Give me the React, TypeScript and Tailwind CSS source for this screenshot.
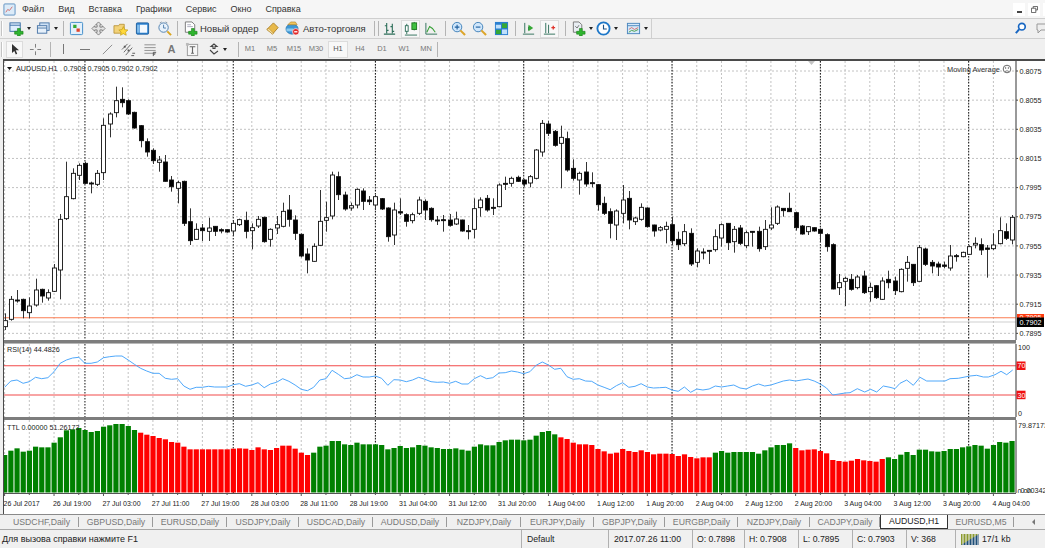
// MetaTrader 4 window: AUDUSD,H1 chart with RSI and TTL sub-windows
import type { ReactNode } from 'react'

// ── Chart data (read off the picture) ─────────────────────────────

const xOf = (i: number) => 4.6 + 6.18 * i

// high, body top, body bottom, low (y = 60 + v / 3), 1 = bull (white body)
const candles: number[][] = [
  [760,782,800,810,1],[708,718,778,782,1],[690,720,722,728,0],[716,718,752,775,0],[712,738,758,775,1],[656,690,735,740,1],[686,688,708,728,0],[688,698,714,722,1],
  [612,624,694,696,1],[462,478,630,718,1],[305,410,476,480,1],[325,340,416,418,1],[310,316,346,360,1],[305,310,370,372,0],[365,369,371,400,0],[330,340,373,378,1],
  [175,196,338,360,1],[157,162,192,232,1],[80,122,158,172,1],[82,118,128,142,0],[118,122,162,165,0],[155,157,204,206,0],[195,197,242,262,0],[235,245,276,290,0],
  [265,271,302,312,0],[288,300,307,335,1],[285,306,364,365,0],[348,360,380,395,0],[362,368,385,430,1],[362,364,490,498,0],[445,485,542,555,0],[490,508,538,540,1],
  [492,504,512,543,0],[473,504,514,543,1],[498,499,514,528,0],[505,509,513,520,0],[508,509,516,518,0],[480,490,513,528,1],[476,479,494,498,1],[455,481,514,535,0],
  [490,503,512,568,1],[468,478,498,504,1],[470,472,545,548,0],[505,508,538,560,1],[468,494,504,522,1],[428,454,499,502,1],[405,450,478,500,0],[466,480,520,540,0],
  [520,523,588,592,0],[565,582,600,640,0],[550,559,604,605,1],[390,484,556,558,1],[425,473,481,515,1],[335,345,468,478,1],[335,350,404,420,0],[395,405,447,452,0],
  [428,437,444,452,1],[385,388,435,445,1],[385,393,424,450,0],[408,420,425,435,0],[405,410,435,450,1],[414,416,447,450,0],[442,444,530,545,0],[428,450,525,555,1],
  [415,455,459,465,0],[460,464,484,500,0],[458,464,482,490,1],[410,420,460,465,1],[418,424,450,480,0],[442,445,479,485,0],[468,480,483,495,0],[465,479,481,515,0],
  [462,480,496,500,0],[455,477,492,495,1],[479,480,513,515,0],[495,512,514,538,0],[415,446,508,535,1],[412,420,443,470,1],[405,415,450,455,0],[415,442,445,465,0],
  [370,375,440,442,1],[350,370,373,390,0],[350,355,370,380,1],[347,352,364,366,0],[358,360,372,380,0],[345,350,369,382,1],[267,270,355,358,1],[180,190,276,290,1],
  [182,192,220,228,0],[210,214,256,260,0],[197,232,250,385,1],[215,236,330,335,0],[298,325,355,362,0],[335,340,360,404,1],[306,336,372,380,0],[337,368,371,382,0],
  [372,374,434,452,0],[410,430,460,465,0],[445,455,490,535,0],[448,453,495,540,1],[375,420,460,490,1],[393,415,480,508,0],[470,474,485,495,1],[430,442,478,482,1],
  [442,444,500,503,0],[494,495,513,530,0],[498,503,510,514,1],[485,499,508,550,1],[470,494,542,555,0],[515,538,554,570,0],[492,515,551,558,1],[505,520,612,618,0],
  [565,573,607,622,1],[565,576,578,598,0],[570,571,573,612,0],[508,530,569,575,1],[490,494,534,560,1],[490,490,548,570,0],[498,508,545,578,1],[495,504,550,555,0],
  [512,518,557,565,1],[513,514,516,560,0],[500,514,566,575,0],[480,508,560,570,1],[442,495,504,510,1],[436,441,490,495,1],[445,445,452,470,0],[398,445,455,455,0],
  [455,458,503,512,0],[495,498,522,524,0],[498,500,515,525,1],[502,503,513,515,0],[505,508,520,545,0],[520,524,560,575,0],[550,554,687,688,0],[642,668,683,705,1],
  [650,655,664,738,1],[642,658,688,692,0],[645,651,683,688,1],[632,648,698,702,0],[668,682,695,725,1],[675,677,713,717,0],[652,663,718,720,1],[632,658,668,685,0],
  [650,663,692,705,0],[625,628,695,697,1],[588,607,625,665,1],[612,613,668,678,0],[555,563,664,665,1],[563,567,613,618,0],[600,607,618,640,0],[605,612,621,648,0],
  [605,615,619,625,0],[555,588,624,632,1],[582,587,590,605,0],[575,577,590,592,1],[556,560,583,585,1],[532,550,555,565,1],[535,554,570,585,0],[555,564,568,653,0],
  [520,555,566,570,1],[472,512,551,553,1],[490,515,535,540,0],[465,472,540,553,1],
]

const rsiPoints = [
  ...[262,243,240,250,245,232,236,233,215,190,180,174,172,190,190,186,173,170,168,168,180,193,205,213,220,220,235,238,236,258,268,262,262,259,261,261,261,254,251,259,255,248,263,252,247,236,244,255]
    .map((v, i) => [xOf(i), 300 + v / 3]),
  ...[148,152,142,120,116,91,103,116,114,104,111,111,108,115,136,119,120,125,120,112,118,125,127,126,130,124,132,132,116,107,116,113,99,98,93,96,101,95,76,66,75,88,85,110,118,116,123,124,135,142,149,137,128,142,139,131,141,144,143,142,150,154,141,157,147]
    .map((v, i) => [xOf(48 + i), 340 + v / 3]),
  ...[390,389,386,387,386,385,388,389,386,384,386,385,383,381,380,381,380,379,381,384,388,395,394,393]
    .map((v, i) => [xOf(113 + i), v]),
  ...[[0,278],[22,266],[44,276],[62,268],[80,276],[100,258],[120,262],[135,266],[150,250],[170,240],[190,256],[210,232],[230,243],[285,243],[300,236],[325,235],[360,228],[380,226],[400,231],[415,231],[435,224],[453,214],[470,224],[488,210]]
    .map(([x, v]) => [850 + x / 3, 300 + v / 3]),
]

const ttlTops = [
  ...[45,32,25,35,32,20,22,22,8].map((v) => 440 + v / 3),
  437.3,430.3,429.3,428,430,432,431,426.7,425.3,424,424,426,430,432.7,434.7,436,438,439.3,
  ...[6,8,20,28,28,28,28,28,28,28,26,25,26,30,22,28,30,24,17,17,26].map((v) => 440 + v / 3),
  ...[338,345,338,320,317,303,303,313,315,308,313,313,313,315,328,324,318,324,322,315,317,322,324,327,327,325,329,332,320,313,316,316,306,301,299,299,301,299,287,276,273,283,292,297,308,313,313,315,327,334,341,338,327,333,336,331,336,343,341,341,342,348,343,351,355].map((v) => 340 + v / 3),
  ...[52,52,38,33,38,36,36,36,36,41,31,22,15,15,10,24,31,29,28,33,40,60,63,65,62,57,61,63,65,57,52,57,44,36,45,29,29,34,35,33,27,27,22,19,15,17,26,15,6,8,3].map((v) => 440 + v / 3),
]

const isRedBar = (i: number) => (i >= 22 && i <= 49) || (i >= 90 && i <= 114) || (i >= 128 && i <= 142)

const gridCols = Array.from({ length: 41 }, (_, k) => xOf(k * 4)).filter((x) => x < 1015)
const periodCols = [13, 37, 60, 84, 108, 132, 156].map(xOf)
const priceLabels = ['0.8075', '0.8055', '0.8035', '0.8015', '0.7995', '0.7975', '0.7955', '0.7935', '0.7915', '0.7895']
const timeLabels = [
  '26 Jul 2017', '26 Jul 19:00', '27 Jul 03:00', '27 Jul 11:00', '27 Jul 19:00', '28 Jul 03:00', '28 Jul 11:00',
  '28 Jul 19:00', '31 Jul 04:00', '31 Jul 12:00', '31 Jul 20:00', '1 Aug 04:00', '1 Aug 12:00', '1 Aug 20:00',
  '2 Aug 04:00', '2 Aug 12:00', '2 Aug 20:00', '3 Aug 04:00', '3 Aug 12:00', '3 Aug 20:00', '4 Aug 04:00',
]

const tabs = [
  { label: 'USDCHF,Daily', w: 'w-[79px] pl-[4px]' },
  { label: 'GBPUSD,Daily', w: 'w-[74px]' },
  { label: 'EURUSD,Daily', w: 'w-[74px]' },
  { label: 'USDJPY,Daily', w: 'w-[72px]' },
  { label: 'USDCAD,Daily', w: 'w-[74px]' },
  { label: 'AUDUSD,Daily', w: 'w-[74px]' },
  { label: 'NZDJPY,Daily', w: 'w-[74px]' },
  { label: 'EURJPY,Daily', w: 'w-[73px]' },
  { label: 'GBPJPY,Daily', w: 'w-[71px]' },
  { label: 'EURGBP,Daily', w: 'w-[73px]' },
  { label: 'NZDJPY,Daily', w: 'w-[72px]' },
  { label: 'CADJPY,Daily', w: 'w-[70px]' },
]

const periods = ['M1', 'M5', 'M15', 'M30', 'H1', 'H4', 'D1', 'W1', 'MN']

// ── Small shared pieces ───────────────────────────────────────────

function Ico({ children, className = 'w-[15px] h-[15px]' }: { children: ReactNode; className?: string }) {
  return (
    <svg viewBox="0 0 16 16" className={className}>
      {children}
    </svg>
  )
}

const GreenPlus = () => <path d="M9 8h3v3h3v3h-3v2H9v-2H6v-3h3z" fill="#2fb52f" stroke="#157a15" strokeWidth="0.6" />

const Caret = () => <span className="w-0 h-0 border-x-[2.5px] border-x-transparent border-t-[3px] border-t-[#222] ml-[3px]" />

const Sep = ({ className = '' }: { className?: string }) => (
  <span className={`w-px h-[15px] bg-[#b4b4b4] shrink-0 ${className}`} />
)

const Handle = () => <span className="w-[2px] h-[15px] bg-[#c4c4c4] border-r border-[#fff] ml-[1px] mr-[3px] shrink-0" />

function Slot({ className, children }: { className: string; children: ReactNode }) {
  return <span className={`flex items-center justify-center shrink-0 h-full ${className}`}>{children}</span>
}

// ── Chart panes ───────────────────────────────────────────────────

function VerticalGrid({ y1, y2 }: { y1: number; y2: number }) {
  return (
    <>
      {gridCols.map((x) => (
        <line key={x} x1={x} x2={x} y1={y1} y2={y2} stroke="#c2c2c2" strokeDasharray="2 2" />
      ))}
    </>
  )
}

function PeriodLines({ y1, y2 }: { y1: number; y2: number }) {
  return (
    <>
      {periodCols.map((x) => (
        <line key={x} x1={x} x2={x} y1={y1} y2={y2} stroke="#111" strokeDasharray="1.5 1.5" />
      ))}
    </>
  )
}

const AxisEdge = ({ y1, y2 }: { y1: number; y2: number }) => (
  <line x1={1016} x2={1016} y1={y1} y2={y2} stroke="#555" strokeWidth="1.2" />
)

function MainPane() {
  return (
    <svg viewBox="4 61 1041 279" className="block w-[1041px] h-[279px] shrink-0 text-[7.2px]">
      {priceLabels.map((p, k) => {
        const y = 71 + k * 29.15
        return (
          <g key={p}>
            <line x1={4} x2={1016} y1={y} y2={y} stroke="#c2c2c2" strokeDasharray="2 2" />
            <line x1={1016} x2={1018} y1={y} y2={y} stroke="#444" />
            <text x={1019.5} y={y + 2.6} fill="#222">{p}</text>
          </g>
        )
      })}
      <VerticalGrid y1={61} y2={340} />
      <PeriodLines y1={61} y2={340} />
      <line x1={4} x2={1016} y1={317.8} y2={317.8} stroke="#fb7d52" strokeWidth="1.1" />
      <line x1={4} x2={1016} y1={322} y2={322} stroke="#cfcfcf" />
      {candles.map(([hi, top, bot, lo, bull], i) => {
        const cx = Math.round(xOf(i)) + 0.5
        const y = (v: number) => 60 + v / 3
        return (
          <g key={i}>
            <line x1={cx} x2={cx} y1={y(hi)} y2={y(lo)} stroke="#333" />
            <rect
              x={cx - 2}
              y={y(top)}
              width={4}
              height={Math.max(y(bot) - y(top), 1)}
              fill={bull ? '#fff' : '#000'}
              stroke="#111"
              strokeWidth="0.9"
            />
          </g>
        )
      })}
      <path d="M808 61h7l-3.5 4z" fill="#c4c4c4" />
      <path d="M7 67h5l-2.5 3z" fill="#111" />
      <text x={16} y={71} fill="#222">AUDUSD,H1</text>
      <text x={63.5} y={71} fill="#222">0.7909 0.7905 0.7902 0.7902</text>
      <text x={947} y={71.5} fill="#333" className="text-[7.4px]">Moving Average</text>
      <circle cx={1007} cy={69} r={3.8} fill="#fff" stroke="#444" strokeWidth="0.8" />
      <path d="M1005 67.5l1.2 1M1006.2 67.5l-1.2 1M1007.8 67.5l1.2 1M1009 67.5l-1.2 1M1005 71.5q2-1.6 4 0" stroke="#333" strokeWidth="0.6" fill="none" />
      <AxisEdge y1={61} y2={340} />
      <rect x={1017} y={314} width={27} height={6} fill="#ff3c10" />
      <text x={1019.5} y={319.6} fill="#fff">0.7905</text>
      <rect x={1017} y={317.5} width={27} height={9.5} fill="#000" />
      <text x={1019.5} y={325} fill="#fff">0.7902</text>
    </svg>
  )
}

function RsiPane() {
  const line = rsiPoints.map(([x, y]) => `${x.toFixed(1)},${y.toFixed(1)}`).join(' ')
  return (
    <svg viewBox="4 344 1041 73" className="block w-[1041px] h-[73px] shrink-0 text-[7.2px]">
      <VerticalGrid y1={344} y2={417} />
      <PeriodLines y1={344} y2={417} />
      <line x1={4} x2={1016} y1={365.7} y2={365.7} stroke="#f24a4a" strokeWidth="1.1" />
      <line x1={4} x2={1016} y1={395} y2={395} stroke="#f24a4a" strokeWidth="1.1" />
      <polyline points={line} fill="none" stroke="#4fa8fb" strokeWidth="1" />
      <text x={7} y={351.5} fill="#222">RSI(14) 44.4826</text>
      <AxisEdge y1={344} y2={417} />
      <text x={1018} y={349.5} fill="#222">100</text>
      <rect x={1016.5} y={361.5} width={9} height={8.5} fill="#f01010" />
      <text x={1017.5} y={368.3} fill="#fff">70</text>
      <rect x={1016.5} y={390.7} width={9} height={8.5} fill="#f01010" />
      <text x={1017.5} y={397.6} fill="#fff">30</text>
      <text x={1018} y={415.5} fill="#222">0</text>
    </svg>
  )
}

function TtlPane() {
  return (
    <svg viewBox="4 420 1041 73" className="block w-[1041px] h-[73px] shrink-0 text-[7.2px]">
      <VerticalGrid y1={420} y2={493} />
      <PeriodLines y1={420} y2={493} />
      {ttlTops.map((top, i) => (
        <rect
          key={i}
          x={xOf(i) - 2.5}
          y={top}
          width={5.2}
          height={492.5 - top}
          fill={isRedBar(i) ? '#ff0000' : '#008000'}
        />
      ))}
      <text x={7} y={429.5} fill="#222">TTL 0.00000 51.26173</text>
      <AxisEdge y1={420} y2={493} />
      <text x={1018} y={427.5} fill="#222">79.87173</text>
      <text x={1017.5} y={494} fill="#222">0.00</text>
      <text x={1020.5} y={493} fill="#222">0.00342</text>
    </svg>
  )
}

function TimeAxis() {
  return (
    <svg viewBox="4 493 1041 21" className="block w-[1041px] h-[21px] shrink-0 text-[7px]">
      <line x1={4} x2={1016} y1={493.5} y2={493.5} stroke="#555" />
      {gridCols.map((x, k) => (
        <line key={x} x1={x} x2={x} y1={493} y2={k % 2 ? 495 : 496} stroke="#555" />
      ))}
      {timeLabels.map((t, k) => (
        <text key={t} x={3.5 + k * 49.45} y={505.5} fill="#222">{t}</text>
      ))}
    </svg>
  )
}

// ── Toolbars ──────────────────────────────────────────────────────

function MainToolbar() {
  return (
    <div className="flex items-center h-[20px] border-t border-[#cfcfcf] bg-[#f0f0f0]">
      <div className="flex items-center h-full w-[652px] border-r border-[#cfcfcf] shrink-0">
        <Handle />
        <Slot className="w-[27px]">
          <Ico>
            <rect x="1" y="2" width="11" height="9" fill="#dfeefc" stroke="#3a6ea5" />
            <path d="M1 4.5h11" stroke="#3a6ea5" />
            <GreenPlus />
          </Ico>
          <Caret />
        </Slot>
        <Slot className="w-[28px]">
          <Ico>
            <rect x="4" y="2" width="10" height="8" fill="#cfe2f6" stroke="#4a76a8" />
            <rect x="1.5" y="5" width="10" height="8" fill="#e6f0fa" stroke="#4a76a8" />
            <path d="M1.5 7.5h10" stroke="#4a76a8" />
          </Ico>
          <Caret />
        </Slot>
        <Slot className="w-[5px]"><Sep /></Slot>
        <Slot className="w-[21px]">
          <Ico>
            <rect x="1.5" y="1.5" width="13" height="13" rx="1" fill="#e3f0fb" stroke="#3d8bc9" />
            <rect x="4.5" y="4" width="3.5" height="3.5" fill="#32a832" />
            <rect x="8" y="8" width="3.5" height="3.5" fill="#e2442c" />
          </Ico>
        </Slot>
        <Slot className="w-[22px]">
          <Ico>
            <path d="M8 1l3 3H9.500v2.500H12V5l3 3-3 3V9.500H9.500V12H11l-3 3-3-3h1.500V9.500H4V11L1 8l3-3v1.500h2.500V4H5z" fill="#e4e4e4" stroke="#666" strokeWidth="0.8" />
          </Ico>
        </Slot>
        <Slot className="w-[22px]">
          <Ico>
            <path d="M1 5h5l1-1.500h5V13H1z" fill="#f2d27a" stroke="#b08a2a" strokeWidth="0.8" />
            <path d="M11 6l1.500 3.200 3.400.4-2.500 2.300.7 3.300-3.100-1.700-3 1.700.7-3.300-2.500-2.300 3.400-.4z" fill="#ffd83a" stroke="#c09a10" strokeWidth="0.7" />
          </Ico>
        </Slot>
        <Slot className="w-[22px]">
          <Ico>
            <rect x="1.500" y="2" width="13" height="12" rx="1" fill="#2f86d4" stroke="#1f5f9e" />
            <rect x="5" y="4" width="8" height="8.500" fill="#f4f9fe" />
            <rect x="2.500" y="4" width="1.500" height="8.500" fill="#9fd0f4" />
          </Ico>
        </Slot>
        <Slot className="w-[22px]">
          <Ico>
            <circle cx="7" cy="7" r="5" fill="#e8f2fb" stroke="#4f7fae" />
            <path d="M7 4v3.500h2.500" stroke="#4f7fae" fill="none" />
            <path d="M3 2l2-1M11 2L9 1" stroke="#8899aa" />
            <path d="M11 11l4 4" stroke="#d9a520" strokeWidth="2" />
          </Ico>
        </Slot>
        <Slot className="w-[5px]"><Sep /></Slot>
        <span className="flex items-center h-full w-[81px] shrink-0 pl-[3px]">
          <Ico>
            <path d="M2.500 1h7l3 3v8h-10z" fill="#fff" stroke="#777" />
            <path d="M4.500 4h4M4.500 6h6" stroke="#aab" />
            <GreenPlus />
          </Ico>
          <span className="ml-[2px] text-[#333]">Новый ордер</span>
        </span>
        <Slot className="w-[22px]">
          <Ico>
            <path d="M2 9l7-7 5 5-6 7z" fill="#e8b94a" stroke="#a97a1e" strokeWidth="0.9" />
            <path d="M2 9l6 5 1-1-5-5z" fill="#f6e3a8" stroke="#a97a1e" strokeWidth="0.5" />
          </Ico>
        </Slot>
        <span className="flex items-center h-full w-[84px] shrink-0 pl-[2px]">
          <Ico>
            <ellipse cx="7.500" cy="8.500" rx="6.500" ry="5.500" fill="#3d97d6" stroke="#1f6ea8" strokeWidth="0.7" />
            <path d="M3 4l3-3h5l2 3z" fill="#efc45c" stroke="#a97a1e" strokeWidth="0.6" />
            <path d="M1.500 8h7v3h-7z" fill="#8ccbf0" />
            <circle cx="11.500" cy="11.500" r="3.500" fill="#e22c2c" stroke="#fff" strokeWidth="0.7" />
            <rect x="9.800" y="10.800" width="3.400" height="1.400" fill="#fff" />
          </Ico>
          <span className="ml-[3px] text-[#333] whitespace-nowrap">Авто-торговля</span>
        </span>
        <Slot className="w-[8px] justify-end"><Sep /></Slot>
        <Slot className="w-[4px] justify-end"><Sep /></Slot>
        <Slot className="w-[20px]">
          <Ico>
            <path d="M5 2v11M3 5h2M5 10h2M11 3v10M9 6h2M11 11h2M2 14h12" stroke="#2e6f5a" strokeWidth="1.200" fill="none" />
          </Ico>
        </Slot>
        <Slot className="w-[19px] ml-[2px] bg-[#f8f8f8] border border-[#dcdcdc] !h-[18px]">
          <Ico>
            <path d="M4 3v11M12 1v9M2 15h13" stroke="#2e6f5a" fill="none" />
            <rect x="2.500" y="5" width="3" height="6" fill="#fff" stroke="#2e6f5a" />
            <rect x="9.500" y="2" width="5" height="7" fill="#40c040" stroke="#1f7a1f" />
          </Ico>
        </Slot>
        <Slot className="w-[23px]">
          <Ico>
            <path d="M2 2v12h12" stroke="#2e6f5a" fill="none" />
            <path d="M3 12l3-6 3 2 3 4" stroke="#35a035" fill="none" strokeWidth="1.100" />
          </Ico>
        </Slot>
        <Slot className="w-[5px]"><Sep /></Slot>
        <Slot className="w-[20px]">
          <Ico>
            <circle cx="6.500" cy="6.500" r="5" fill="#cfe6fb" stroke="#3e7fb8" />
            <path d="M4 6.500h5M6.500 4v5" stroke="#1f5f9e" strokeWidth="1.200" />
            <path d="M10 10l5 5" stroke="#dca52a" strokeWidth="2.200" />
          </Ico>
        </Slot>
        <Slot className="w-[22px]">
          <Ico>
            <circle cx="6.500" cy="6.500" r="5" fill="#cfe6fb" stroke="#3e7fb8" />
            <path d="M4 6.500h5" stroke="#1f5f9e" strokeWidth="1.200" />
            <path d="M10 10l5 5" stroke="#dca52a" strokeWidth="2.200" />
          </Ico>
        </Slot>
        <Slot className="w-[22px]">
          <Ico>
            <rect x="1" y="1" width="14" height="14" fill="#2a7fd0" />
            <rect x="2" y="4" width="5.500" height="4" fill="#bfe0fb" />
            <rect x="8.500" y="2.500" width="5.500" height="5" fill="#35a835" />
            <rect x="2" y="9.500" width="5.500" height="4.500" fill="#35a835" />
            <rect x="8.500" y="9" width="5.500" height="5" fill="#bfe0fb" />
          </Ico>
        </Slot>
        <Slot className="w-[6px]"><Sep /></Slot>
        <Slot className="w-[21px]">
          <Ico>
            <path d="M4 2v11M2 14h12M8 6v4" stroke="#2e6f5a" fill="none" />
            <path d="M8 4l5 3.500-5 3.500z" fill="#35a835" />
          </Ico>
        </Slot>
        <Slot className="w-[19px] ml-[1px] bg-[#f8f8f8] border border-[#dcdcdc] !h-[18px]">
          <Ico>
            <path d="M4 2v11M7 4v9M2 14h12" stroke="#2e6f5a" fill="none" />
            <path d="M10 7h4M12 5v4" stroke="#e0342c" strokeWidth="1.400" />
          </Ico>
        </Slot>
        <Slot className="w-[12px]"><Sep /></Slot>
        <Slot className="w-[24px] justify-start">
          <Ico>
            <path d="M2.500 1h6l3 3v8h-9z" fill="#e9eef3" stroke="#777" />
            <path d="M4.500 5.500l2 2 2-3" stroke="#555" fill="none" strokeWidth="0.8" />
            <GreenPlus />
          </Ico>
          <Caret />
        </Slot>
        <Slot className="w-[26px] justify-start pl-[1px]">
          <Ico>
            <circle cx="8" cy="8" r="6.500" fill="#fff" stroke="#1f78c8" strokeWidth="2" />
            <path d="M8 4v4.500h3.500" stroke="#1a4f84" fill="none" strokeWidth="1.200" />
          </Ico>
          <Caret />
        </Slot>
        <Slot className="w-[30px] justify-start pl-[5px]">
          <Ico>
            <rect x="1.500" y="2.500" width="13" height="11" fill="#d6e9fa" stroke="#4b86bd" />
            <path d="M1.500 5h13" stroke="#4b86bd" />
            <path d="M3 9l3-2 3 2 4-2" stroke="#d26a6a" fill="none" />
            <path d="M3 12l3-2 3 1 4-2" stroke="#45a045" fill="none" />
          </Ico>
          <Caret />
        </Slot>
      </div>
      <div className="ml-auto flex items-center gap-[7px] w-[31px] shrink-0">
        <svg viewBox="0 0 14 14" className="w-[13px] h-[13px] shrink-0">
          <circle cx="8.500" cy="5" r="3.600" fill="#fff" stroke="#1766c2" strokeWidth="1.800" />
          <path d="M5.500 8l-3.500 4" stroke="#1766c2" strokeWidth="2.200" />
        </svg>
        <svg viewBox="0 0 14 14" className="w-[14px] h-[14px] shrink-0">
          <path d="M3 2h9v6H7l-3 3V8H3z" fill="#eee" stroke="#999" />
        </svg>
      </div>
    </div>
  )
}

function ChartToolbar() {
  return (
    <div className="flex items-center h-[21px] border-t border-[#cfcfcf] bg-[#f0f0f0]">
      <Handle />
      <Slot className="w-[17px] bg-[#f8f8f8] border border-[#dcdcdc] !h-[17px]">
        <svg viewBox="0 0 12 12" className="w-[12px] h-[12px]">
          <path d="M3 1v9l2.300-2 1.500 3.500 1.400-.7L6.700 7.300H10z" fill="#333" />
        </svg>
      </Slot>
      <Slot className="w-[24px]">
        <svg viewBox="0 0 14 14" className="w-[13px] h-[13px]">
          <path d="M7 1v4M7 9v4M1 7h4M9 7h4" stroke="#777" />
        </svg>
      </Slot>
      <Slot className="w-[6px]"><Sep /></Slot>
      <Slot className="w-[21px]"><span className="w-px h-[10px] bg-[#777]" /></Slot>
      <Slot className="w-[22px]"><span className="w-[10px] h-px bg-[#777]" /></Slot>
      <Slot className="w-[22px]">
        <svg viewBox="0 0 14 14" className="w-[13px] h-[13px]">
          <path d="M2 12L12 2" stroke="#888" />
        </svg>
      </Slot>
      <Slot className="w-[21px]">
        <Ico>
          <path d="M1 8l6-6M3 11l7-8M5 14l7-8" stroke="#666" />
          <rect x="3" y="4" width="2" height="2" fill="#555" />
          <rect x="7" y="8" width="2" height="2" fill="#555" />
          <path d="M11 14.500h3M12 12h3" stroke="#555" />
        </Ico>
      </Slot>
      <Slot className="w-[22px]">
        <Ico>
          <path d="M1.500 3h12M1.500 6h12M1.500 9h12M1.500 12h12" stroke="#8d8d8d" />
          <path d="M11 11v4M11 11h3M11 13h2" stroke="#555" fill="none" />
        </Ico>
      </Slot>
      <Slot className="w-[21px]"><span className="text-[11px] font-bold text-[#777]">A</span></Slot>
      <Slot className="w-[21px]">
        <Ico>
          <rect x="2.500" y="2.500" width="11" height="12" fill="#f7f7f7" stroke="#999" />
          <path d="M5 5h6M8 5v7M6.500 12h3" stroke="#666" strokeWidth="1.200" fill="none" />
          <rect x="1" y="1" width="3" height="3" fill="#bbb" />
        </Ico>
      </Slot>
      <Slot className="w-[27px] justify-start pl-[5px]">
        <svg viewBox="0 0 12 12" className="w-[12px] h-[12px]">
          <path d="M6 1L3 3.500h2v2h2v-2h2zM2 7l4 4 4-3" stroke="#444" fill="none" strokeWidth="1.100" />
        </svg>
        <Caret />
      </Slot>
      <Slot className="w-[9px] justify-end"><Sep /></Slot>
      {periods.map((p) => (
        <span
          key={p}
          className={
            p === 'H1'
              ? 'flex items-center justify-center w-[20px] h-[17px] mx-[1px] text-[7.5px] text-[#555] bg-[#f8f8f8] border border-[#dcdcdc] shrink-0'
              : 'flex items-center justify-center w-[22px] h-[17px] text-[7.5px] text-[#777] shrink-0'
          }
        >
          {p}
        </span>
      ))}
      <Sep />
    </div>
  )
}

// ── Page ──────────────────────────────────────────────────────────

export default function App() {
  const menu = ['Файл', 'Вид', 'Вставка', 'Графики', 'Сервис', 'Окно', 'Справка']

  return (
    <div className="w-[1045px] h-[548px] overflow-hidden flex flex-col bg-[#f0f0f0] text-[9.5px] leading-none [font-family:'Liberation_Sans',sans-serif]">
      {/* ── Menu bar ──────────────────────────────────────────── */}
      <div className="flex items-center h-[18px] bg-[#f6f6f6] shrink-0">
        <svg viewBox="0 0 14 14" className="w-[13px] h-[13px] ml-[3px] shrink-0">
          <rect x="1" y="1" width="12" height="12" rx="1" fill="#dcebf8" stroke="#5b8fc0" />
          <path d="M3 10l2-3 2 1 3-4" stroke="#d06a6a" fill="none" />
        </svg>
        <nav className="flex items-center gap-[14px] ml-[6px] text-[9px] text-[#333]">
          {menu.map((m) => (
            <span key={m}>{m}</span>
          ))}
        </nav>
        <div className="ml-auto flex items-center gap-[3px] -mr-[10px]">
          <span className="flex items-end justify-center w-[12px] h-[13px] bg-white pb-[3px]"><span className="w-[5px] h-[1.5px] bg-[#444]" /></span>
          <span className="flex items-center justify-center w-[12px] h-[13px] bg-white">
            <svg viewBox="0 0 8 8" className="w-[7px] h-[7px]">
              <path d="M2.500 2.500V.5h5v4h-2M.5 2.500h5v5h-5z" fill="none" stroke="#555" />
            </svg>
          </span>
          <span className="w-[12px] h-[13px] bg-white" />
        </div>
      </div>

      <MainToolbar />
      <ChartToolbar />

      {/* ── Chart window ──────────────────────────────────────── */}
      <div className="ml-[3px] w-[1042px] border-t-2 border-l border-[#4a4a4a] bg-white flex flex-col shrink-0">
        <MainPane />
        <div className="w-[1012px] h-[4px] bg-[#7d7d7d] border-b border-[#b8b8b8] shrink-0" />
        <RsiPane />
        <div className="w-[1012px] h-[3px] bg-[#7d7d7d] shrink-0" />
        <TtlPane />
        <TimeAxis />
      </div>

      {/* ── Chart tabs ────────────────────────────────────────── */}
      <div className="flex items-stretch h-[15px] border-t border-[#8a8a8a] bg-[#f0f0f0] text-[8.7px] shrink-0">
        {tabs.map((t, i) => (
          <span key={i} className={`flex items-center justify-center ${t.w} text-[#777] shrink-0 relative`}>
            {t.label}
            <span className="absolute right-0 top-[2px] bottom-[2px] w-px bg-[#9a9a9a]" />
          </span>
        ))}
        <span className="flex items-center justify-center w-[68px] bg-white border-x border-b border-[#333] text-[#222] shrink-0">
          AUDUSD,H1
        </span>
        <span className="flex items-center justify-center w-[66px] text-[#777] shrink-0 relative">
          EURUSD,M5
          <span className="absolute right-0 top-[2px] bottom-[2px] w-px bg-[#9a9a9a]" />
        </span>
        <span className="ml-[18px] self-center w-0 h-0 border-y-[3px] border-y-transparent border-r-[3.5px] border-r-[#777]" />
      </div>

      {/* ── Status bar ────────────────────────────────────────── */}
      <div className="flex items-stretch h-[19px] border-t border-[#a8a8a8] text-[#222] text-[8.7px] bg-[#f0f0f0] shrink-0">
        <span className="flex items-center w-[521px] pl-[2px] text-[9px] shrink-0">Для вызова справки нажмите F1</span>
        <span className="flex items-center w-[87px] pl-[5px] border-l border-[#b0b0b0] shrink-0">Default</span>
        <span className="flex items-center w-[84px] pl-[5px] border-l border-[#b0b0b0] shrink-0 whitespace-nowrap">2017.07.26 11:00</span>
        <span className="flex items-center w-[52px] pl-[4px] border-l border-[#b0b0b0] shrink-0">O: 0.7898</span>
        <span className="flex items-center w-[54px] pl-[4px] border-l border-[#b0b0b0] shrink-0">H: 0.7908</span>
        <span className="flex items-center w-[54px] pl-[4px] border-l border-[#b0b0b0] shrink-0">L: 0.7895</span>
        <span className="flex items-center w-[54px] pl-[4px] border-l border-[#b0b0b0] shrink-0">C: 0.7903</span>
        <span className="flex items-center w-[49px] pl-[4px] border-l border-[#b0b0b0] shrink-0">V: 368</span>
        <span className="flex items-center pl-[5px] border-l border-[#b0b0b0] shrink-0">
          <svg viewBox="0 0 18 11" className="w-[18px] h-[11px] mr-[3px]">
            <rect width="18" height="11" fill="#8b9a2e" />
            <path d="M0 11L18 0v11z" fill="#1f4f78" />
            <path d="M2 0v11M5 0v11M8 0v11M11 0v11M14 0v11M17 0v11" stroke="#f0f0f0" />
          </svg>
          17/1 kb
        </span>
      </div>
    </div>
  )
}
